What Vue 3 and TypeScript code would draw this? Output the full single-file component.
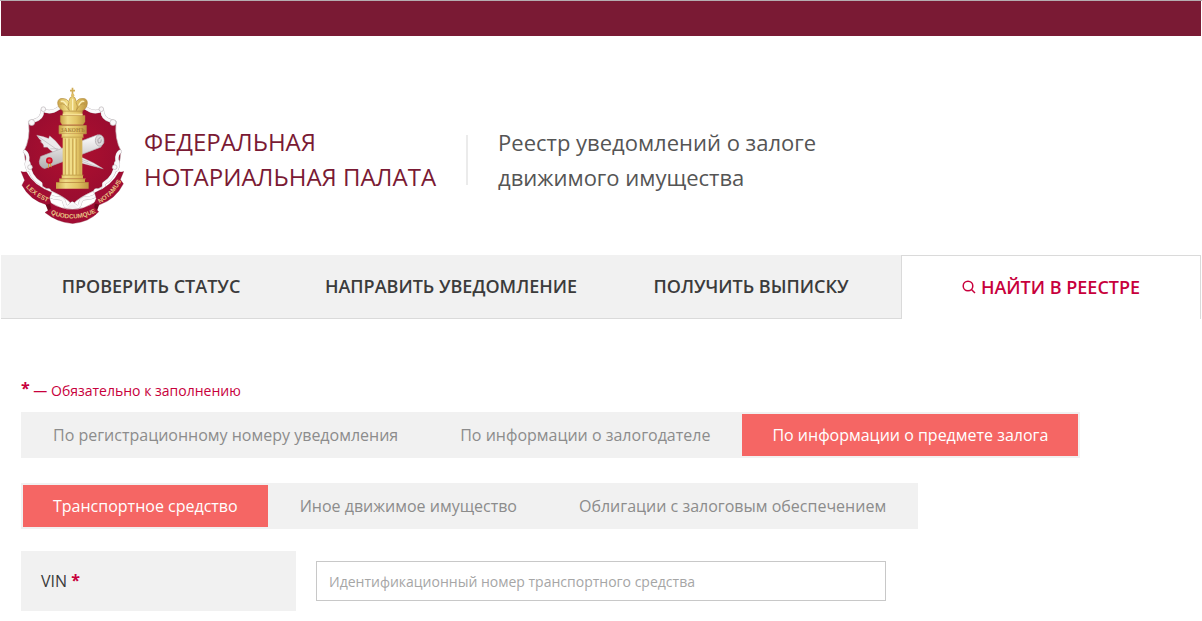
<script setup lang="ts">
import { ref } from 'vue'

const sections = ['Проверить статус', 'Направить уведомление', 'Получить выписку', 'Найти в реестре']
const activeSection = ref(3)

const searchModes = [
  'По регистрационному номеру уведомления',
  'По информации о залогодателе',
  'По информации о предмете залога',
]
const activeMode = ref(2)

const propertyKinds = ['Транспортное средство', 'Иное движимое имущество', 'Облигации с залоговым обеспечением']
const activeKind = ref(0)

const vin = ref('')

// One half of the shield's scrolled edge; the other half is its mirror image.
const edgeHalf =
  'M148 85 Q122 104 100 92 M97 93 Q98 116 72 124 L59 128 M44 216 Q55 224 53 242 Q45 252 54 270 ' +
  'M56 250 Q58 292 92 312 Q91 338 108 333 Q124 328 115 345 C132 365 158 346 163 369 Q165 384 174 382 L187 372'
</script>

<template>
  <div class="page">
    <div class="topbar"></div>

    <header class="header">
      <svg class="emblem" viewBox="30 24 312 411" aria-hidden="true">
        <defs>
          <linearGradient id="gold" x1="0" x2="1" y1="0" y2="0">
            <stop offset="0" stop-color="#c9a247" />
            <stop offset="0.3" stop-color="#f0dc86" />
            <stop offset="0.65" stop-color="#e2c465" />
            <stop offset="1" stop-color="#bd9540" />
          </linearGradient>
          <radialGradient id="crimson" cx="0.5" cy="0.45" r="0.6">
            <stop offset="0" stop-color="#b0102f" />
            <stop offset="1" stop-color="#960c30" />
          </radialGradient>
          <linearGradient id="paper" x1="0" x2="0" y1="0" y2="1">
            <stop offset="0" stop-color="#ffffff" />
            <stop offset="1" stop-color="#b2afb1" />
          </linearGradient>
          <path id="mottoLeft" d="M44 318 Q68 350 118 370" />
          <path id="mottoMid" d="M116 400 Q188 436 264 396" />
          <path id="mottoRight" d="M264 374 Q310 352 337 300" />
        </defs>
        <!-- shield -->
        <path d="M99 96 Q122 106 150 88 H226 Q252 106 276 96 Q284 122 318 130 Q314 180 333 214 Q331 270 298 304 C270 335 218 340 187 376 C156 340 105 335 78 304 Q45 270 42 214 Q61 180 56 130 Q90 122 99 96Z" fill="url(#crimson)" stroke="#c4b5ba" stroke-width="2" />
        <!-- scrolled edge -->
        <g fill="none" stroke-linecap="round" stroke-linejoin="round">
          <path :d="edgeHalf" stroke="#b9b3b7" stroke-width="11" />
          <path :d="edgeHalf" transform="matrix(-1 0 0 1 374 0)" stroke="#b9b3b7" stroke-width="11" />
          <path :d="edgeHalf" stroke="#faf9fa" stroke-width="9" />
          <path :d="edgeHalf" transform="matrix(-1 0 0 1 374 0)" stroke="#faf9fa" stroke-width="9" />
        </g>
        <g fill="#faf9fa" stroke="#b9b3b7" stroke-width="2">
          <circle cx="100" cy="89" r="7" />
          <circle cx="274" cy="89" r="7" />
          <circle cx="65" cy="129" r="9" />
          <circle cx="309" cy="129" r="9" />
          <circle cx="60" cy="263" r="7" />
          <circle cx="314" cy="263" r="7" />
          <circle cx="106" cy="340" r="6" />
          <circle cx="268" cy="340" r="6" />
        </g>
        <path d="M170 388 Q187 362 204 388 L187 403Z" fill="#f3f0f1" />
        <!-- quill -->
        <path d="M80 167 Q100 170 116 177 L119 169 Q139 184 153 204 L166 219 Q223 230 280 268 Q219 252 168 239 Q128 222 112 203 L101 203 Q103 195 91 187 L95 185 Q87 178 80 167Z" fill="#eceaec" stroke="#b5b0b4" stroke-width="1" />
        <path d="M83 170 L168 229 L276 267 M121 208 L145 208 M201 235 L235 247" fill="none" stroke="#a9a4a8" stroke-width="1.5" />
        <!-- scroll -->
        <path d="M92 231 L263 166 Q281 166 281 189 L272 203 L104 267 Q88 263 88 246Z" fill="url(#paper)" stroke="#b5b0b5" stroke-width="2" />
        <ellipse cx="269" cy="183" rx="13" ry="17" fill="#ddd9dc" stroke="#a7a2a6" stroke-width="2" />
        <path d="M272 174 Q259 178 266 191 Q275 191 274 180" fill="none" stroke="#8e898d" stroke-width="2" />
        <path d="M116 249 L115 266 M120 249 L124 263" stroke="#d39b3c" stroke-width="3" />
        <circle cx="118" cy="243" r="10" fill="#d30e28" />
        <circle cx="118" cy="243" r="5" fill="#e3505c" />
        <!-- column -->
        <path d="M151 108 H225 V127 L219 136 H156 L151 127Z" fill="url(#gold)" stroke="#c19c48" stroke-width="1" />
        <path d="M147 138 H229 V163 H147Z" fill="url(#gold)" stroke="#b79145" stroke-width="2" />
        <path d="M155 163 H220 V174 H155Z M158 174 H217 V287 H158Z M155 287 H219 V297 H155Z M148 298 H225 V308 H148Z M138 309 H236 V328 H138Z" fill="url(#gold)" />
        <path d="M166 177 V286 M177 177 V286 M188 177 V286 M199 177 V286 M210 177 V286" stroke="#c9a653" stroke-width="3" />
        <path d="M171 177 V286 M183 177 V286 M194 177 V286" stroke="#f8e898" stroke-width="3" />
        <path d="M153 173 H222 M154 287 H221 M147 298 H228 M138 309 H236" stroke="#b8923f" stroke-width="2" />
        <text class="column-mark" x="188" y="156" text-anchor="middle">ЗАКОНЪ</text>
        <!-- crown -->
        <path d="M159 94 Q143 85 143 69 Q145 55 159 57 Q170 57 176 66 Q179 51 188 50 Q196 51 199 66 Q206 55 219 57 Q232 57 232 71 Q231 86 217 94 L216 108 H159Z" fill="url(#gold)" stroke="#b48d40" stroke-width="2" />
        <path d="M151 74 Q163 68 176 91 M225 74 Q212 68 200 91 M177 68 Q171 80 178 94 M198 68 Q206 80 199 94 M158 95 H218" fill="none" stroke="#b18b40" stroke-width="2" />
        <path d="M152 66 Q163 62 170 78 M223 66 Q213 62 206 78 M188 58 V92" fill="none" stroke="#fbefb8" stroke-width="4" />
        <path d="M158 105 H218" stroke="#f7e296" stroke-width="5" />
        <path d="M185 25 H190 V31 H195 V36 H190 V45 H185 V36 H180 V31 H185Z" fill="#d0ab54" />
        <circle cx="188" cy="47" r="5" fill="#dfbf68" />
        <!-- ribbons -->
        <path d="M104 368 L125 373 L142 392 L119 406Z M270 368 L250 373 L234 392 L257 406Z" fill="#6d061d" />
        <path d="M33 276 Q42 279 49 277 Q70 318 125 339 L118 355 L123 372 L110 376 Q59 361 36 317 L44 302Z" fill="#a20d34" stroke="#7a061f" stroke-width="1" />
        <path d="M341 276 Q333 279 327 277 Q305 320 254 340 L259 356 L253 371 L268 376 Q317 359 340 313 L331 300Z" fill="#a20d34" stroke="#7a061f" stroke-width="1" />
        <path d="M119 369 Q188 412 256 368 L253 383 L266 397 Q237 428 188 432 Q142 429 105 399 L123 387Z" fill="#a20d34" stroke="#7a061f" stroke-width="1" />
        <text class="motto" text-anchor="middle"><textPath href="#mottoLeft" startOffset="50%">LEX EST</textPath></text>
        <text class="motto" text-anchor="middle"><textPath href="#mottoMid" startOffset="50%">QUODCUMQUE</textPath></text>
        <text class="motto" text-anchor="middle"><textPath href="#mottoRight" startOffset="50%">NOTAMUS</textPath></text>
      </svg>
      <div class="owner">Федеральная<br />нотариальная палата</div>
      <h1 class="title">Реестр уведомлений о залоге<br />движимого имущества</h1>
    </header>

    <nav class="sections">
      <a
        v-for="(name, i) in sections"
        :key="name"
        href="#"
        class="section"
        :class="{ active: i === activeSection }"
        @click.prevent="activeSection = i"
      >
        <svg v-if="i === 3" class="search-icon" viewBox="0 0 14 14" aria-hidden="true">
          <circle cx="6" cy="6" r="4.8" />
          <path d="M9.5 9.5 L13 13" />
        </svg>
        {{ name }}
      </a>
    </nav>

    <main class="content">
      <p class="required-note"><b class="star">*</b> — Обязательно к заполнению</p>

      <div class="segments">
        <button
          v-for="(name, i) in searchModes"
          :key="name"
          type="button"
          class="segment"
          :class="{ active: i === activeMode }"
          @click="activeMode = i"
        >{{ name }}</button>
      </div>

      <div class="segments">
        <button
          v-for="(name, i) in propertyKinds"
          :key="name"
          type="button"
          class="segment"
          :class="{ active: i === activeKind }"
          @click="activeKind = i"
        >{{ name }}</button>
      </div>

      <div class="field">
        <label class="field-label" for="vin">VIN <b class="star">*</b></label>
        <input id="vin" v-model="vin" class="field-input" type="text" placeholder="Идентификационный номер транспортного средства" />
      </div>
    </main>
  </div>
</template>

<style>
body {
  background: #fff;
}
</style>

<style scoped>
.page {
  box-sizing: border-box;
  padding: 0 1px;
  font-family: "Open Sans", "Noto Sans", sans-serif;
  font-size: 16px;
  color: #3b3b3b;
  border-top: 1px solid #b5adb0;
}

.topbar {
  height: 35px;
  background: #7a1a34;
}

.header {
  display: flex;
  align-items: center;
  padding: 51px 20px 30px 19px;
}

.emblem {
  width: 104px;
  height: 138px;
  flex: none;
}

.column-mark {
  font: bold 17px "Liberation Serif", serif;
  fill: #a9833a;
}

.motto {
  font: bold 19px "Liberation Sans", sans-serif;
  fill: #e8c684;
}

.owner {
  margin-left: 20px;
  padding-top: 6px;
  font-size: 24px;
  line-height: 35px;
  text-transform: uppercase;
  color: #7a1a34;
}

.title {
  display: flex;
  align-items: center;
  margin: 0 0 0 30px;
  padding-top: 7px;
  font-size: 22px;
  font-weight: 400;
  line-height: 35px;
  color: #555;
}

.title::before {
  content: "";
  width: 2px;
  height: 50px;
  margin-right: 30px;
  background: #ebebeb;
}

.sections {
  display: grid;
  grid-template-columns: repeat(4, 1fr);
}

.section {
  box-sizing: border-box;
  display: flex;
  align-items: center;
  justify-content: center;
  gap: 5px;
  height: 64px;
  padding-bottom: 2px;
  border-bottom: 1px solid #dadada;
  background: #f1f1f1;
  color: #3b3b3b;
  font-size: 18px;
  font-weight: 600;
  text-decoration: none;
  text-transform: uppercase;
}

.section.active {
  border: 1px solid #dadada;
  border-bottom: 0;
  background: #fff;
  color: #c8003c;
}

.search-icon {
  width: 14px;
  height: 14px;
  fill: none;
  stroke: currentColor;
  stroke-width: 1.5;
}

.content {
  padding: 60px 20px 10px;
}

.required-note {
  margin: 0 0 9px;
  font-size: 14px;
  line-height: 24px;
  color: #c8003c;
}

.star {
  font-size: 16px;
  font-weight: 700;
  line-height: 1;
  color: #c8003c;
}

.required-note .star {
  vertical-align: 2px;
}

.segments {
  display: flex;
  width: fit-content;
  gap: 2px;
  margin-bottom: 25px;
  padding: 2px;
  background: #f1f1f1;
}

.segment {
  height: 42px;
  padding: 0 30px;
  border: 0;
  background: none;
  color: #8c8c8c;
  font: inherit;
  white-space: nowrap;
  cursor: pointer;
}

.segment.active {
  background: #f56664;
  color: #fff;
}

.field {
  display: flex;
  align-items: center;
  gap: 20px;
  margin-top: -3px;
}

.field-label {
  box-sizing: border-box;
  width: 275px;
  padding: 0 20px;
  line-height: 60px;
  background: #f1f1f1;
}

.field-label .star {
  vertical-align: 1px;
}

.field-input {
  box-sizing: border-box;
  width: 570px;
  height: 40px;
  padding: 0 12px;
  border: 1px solid #c8c8c8;
  border-radius: 0;
  background: #fff;
  color: #3b3b3b;
  font-family: inherit;
  font-size: 14px;
}

.field-input::placeholder {
  color: #a6a6a6;
}
</style>
